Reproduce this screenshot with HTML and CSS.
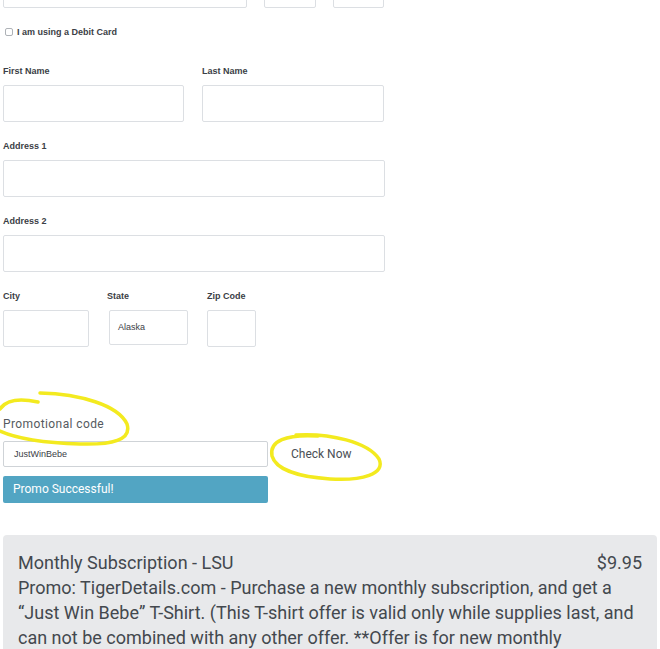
FILE: index.html
```html
<!DOCTYPE html>
<html lang="en">
<head>
	<meta charset="UTF-8">
	<title>Checkout</title>
	<link rel="stylesheet" href="styles.css">
</head>
<body>
	<div class="wrap">
		<form class="checkout">
			<div class="row top-row">
				<input class="field card-num" type="text">
				<input class="field card-exp" type="text">
				<input class="field card-cvv" type="text">
			</div>
			<label class="debit"><input type="checkbox"><span>I am using a Debit Card</span></label>

			<div class="row names">
				<div class="group">
					<label>First Name</label>
					<input class="field" type="text">
				</div>
				<div class="group">
					<label>Last Name</label>
					<input class="field" type="text">
				</div>
			</div>
			<div class="group wide">
				<label>Address 1</label>
				<input class="field" type="text">
			</div>
			<div class="group wide">
				<label>Address 2</label>
				<input class="field" type="text">
			</div>
			<div class="row place">
				<div class="group city">
					<label>City</label>
					<input class="field" type="text">
				</div>
				<div class="group state">
					<label>State</label>
					<div class="field select">Alaska</div>
				</div>
				<div class="group zip">
					<label>Zip Code</label>
					<input class="field" type="text">
				</div>
			</div>

			<div class="promo">
				<div class="promo-label">Promotional code</div>
				<div class="promo-row">
					<div class="field promo-input">JustWinBebe</div>
					<span class="check">Check Now</span>
				</div>
				<div class="promo-ok">Promo Successful!</div>
			</div>
		</form>

		<div class="summary">
			<div class="summary-head">
				<span>Monthly Subscription - LSU</span>
				<span>$9.95</span>
			</div>
			<p>Promo: TigerDetails.com - Purchase a new monthly subscription, and get a &ldquo;Just Win Bebe&rdquo; T-Shirt. (This T-shirt offer is valid only while supplies last, and can not be combined with any other offer. **Offer is for new monthly</p>
		</div>

		<svg class="marks" width="660" height="649" viewBox="0 0 660 649">
			<path d="M0,409 C6,400 20,398 38,402"/>
			<path d="M40,393 C80,394 118,405 127,424 C132,440 112,445 80,444 C50,443 20,440 0,431"/>
			<path d="M296,435 C330,433 368,442 379,459 C386,474 362,481 330,479 C300,477 276,470 272,456 C269,441 286,434 318,436"/>
		</svg>
	</div>
</body>
</html>
```

FILE: styles.css
```css
*{
	margin: 0;
	padding: 0;
	box-sizing: border-box;
}
body{
	font-family: "Liberation Sans", Arial, sans-serif;
	color: #3b4046;
	background: #fff;
	overflow: hidden;
}
.wrap{
	position: relative;
	display: flow-root;
	width: 660px;
	height: 649px;
	padding-left: 3px;
}
.checkout{
	width: 382px;
}
.field{
	display: block;
	width: 100%;
	height: 37px;
	border: 1px solid #dcdfe3;
	border-radius: 2px;
	background: #fff;
	font-family: "Liberation Sans", Arial, sans-serif;
	font-size: 9px;
	color: #3b4046;
}
.row{
	display: flex;
}
.top-row{
	margin-top: -29px;
	gap: 17px;
}
.top-row .card-num{
	width: 244px;
}
.top-row .card-exp{
	width: 52px;
}
.top-row .card-cvv{
	width: 51px;
}
.debit{
	display: flex;
	align-items: center;
	gap: 4px;
	margin: 19px 0 0 2px;
	height: 10px;
	font-size: 9px;
	font-weight: bold;
}
.debit input{
	width: 8px;
	height: 8px;
	margin: 0;
	appearance: none;
	border: 1px solid #aeb2b7;
	border-radius: 2px;
	background: #fff;
}
.group label{
	display: block;
	height: 12px;
	line-height: 12px;
	margin-bottom: 8px;
	font-size: 9px;
	font-weight: bold;
}
.names{
	gap: 18px;
	margin-top: 28px;
}
.names .group{
	width: 181px;
}
.names .group:last-child{
	width: 182px;
}
.wide{
	margin-top: 18px;
}
.place{
	margin-top: 18px;
}
.city{
	width: 86px;
}
.state{
	width: 79px;
	margin-left: 20px;
}
.state label{
	margin-left: -2px;
}
.state .select{
	height: 35px;
	line-height: 33px;
	padding-left: 8px;
}
.zip{
	width: 49px;
	margin-left: 19px;
}
.promo{
	margin-top: 70px;
	font-family: Roboto, "Liberation Sans", sans-serif;
}
.promo-label{
	font-size: 12px;
	letter-spacing: 0.4px;
	color: #555a60;
	line-height: 14px;
}
.promo-row{
	display: flex;
	align-items: center;
	margin-top: 10px;
}
.promo-input{
	width: 265px;
	height: 26px;
	line-height: 24px;
	padding-left: 10px;
	border-color: #cfd3d7;
}
.check{
	margin-left: 23px;
	font-size: 12px;
	color: #4a4f55;
}
.promo-ok{
	width: 265px;
	height: 27px;
	line-height: 27px;
	margin-top: 9px;
	padding-left: 10px;
	background: #52a5c3;
	border-radius: 2px;
	color: #fff;
	font-size: 12px;
}
.summary{
	margin-top: 32px;
	width: 654px;
	height: 114px;
	overflow: hidden;
	padding: 15px 15px 0;
	background: #e8e9eb;
	border-radius: 4px 4px 0 0;
	font-family: Roboto, "Liberation Sans", sans-serif;
	font-size: 18px;
	line-height: 25px;
	color: #43484e;
}
.summary-head{
	display: flex;
	justify-content: space-between;
}
.marks{
	position: absolute;
	top: 0;
	left: 0;
	pointer-events: none;
}
.marks path{
	fill: none;
	stroke: #f3ea1f;
	stroke-width: 3.5;
	stroke-linecap: round;
}
```
